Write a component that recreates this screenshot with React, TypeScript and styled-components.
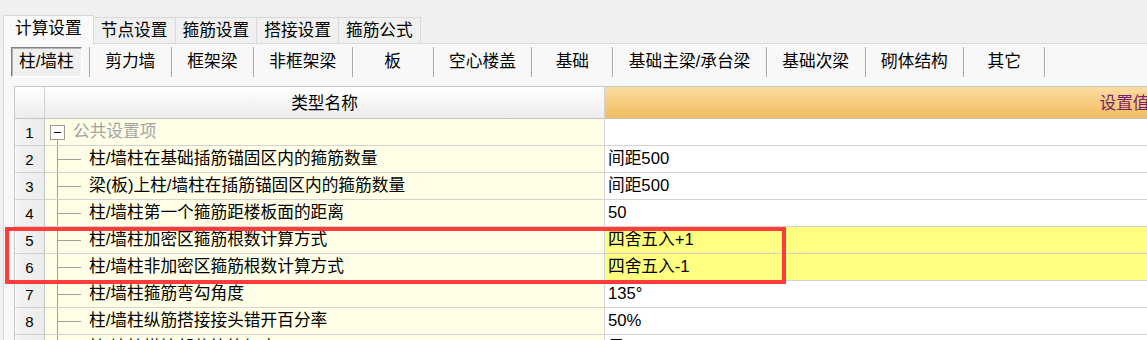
import React from 'react';
import styled, { createGlobalStyle } from 'styled-components';

const Global = createGlobalStyle`
  html, body { margin: 0; padding: 0; background: #f0f0f0; overflow: hidden; }
  body { font-family: "Liberation Sans", "Noto Sans CJK SC", sans-serif; }
`;

const Page = styled.div`
  position: relative;
  width: 1147px;
  height: 340px;
  overflow: hidden;
  background: #f0f0f0;
  font-size: 16.7px;
  color: #000;
  line-height: 1;
`;

const TabStrip = styled.div`
  display: flex;
  align-items: flex-end;
  height: 44px;
  padding-left: 3px;
  box-sizing: border-box;
`;

const Tab = styled.div<{ $active?: boolean }>`
  box-sizing: border-box;
  display: flex;
  align-items: center;
  white-space: nowrap;
  height: ${(p) => (p.$active ? 29 : 27)}px;
  padding: ${(p) => (p.$active ? '0 11px 1px' : '2px 7px 0')};
  border: 1px solid #d9d9d9;
  border-bottom: ${(p) => (p.$active ? 'none' : '1px solid #d9d9d9')};
  margin-left: ${(p) => (p.$active ? 0 : -1)}px;
  background: ${(p) => (p.$active ? '#fafafa' : '#f0f0f0')};
`;

const StripFill = styled.div`
  flex: 1;
  border-bottom: 1px solid #d9d9d9;
`;

const Panel = styled.div`
  margin-left: 3px;
  border-left: 1px solid #d9d9d9;
  background: #f8f8f8;
  height: 296px;
`;

const SubTabs = styled.div`
  display: flex;
  align-items: flex-start;
  height: 42px;
  box-sizing: border-box;
  padding: 3px 0 0 7px;
`;

const SubTab = styled.div<{ $active?: boolean; $first?: boolean }>`
  box-sizing: border-box;
  height: 30px;
  display: flex;
  align-items: center;
  justify-content: center;
  white-space: nowrap;
  ${(p) =>
    p.$active
      ? `
    padding: 0 7px;
    margin-right: 7px;
    background: #f0f0f0;
    border: 1px solid;
    border-color: #808080 #ffffff #ffffff #808080;
    box-shadow: inset 1px 1px 0 #b4b4b4;
  `
      : `
    min-width: 81px;
    padding: 0 15.5px;
    border-right: 1px solid #a8a8a8;
    box-shadow: 1px 0 0 #ffffff;
    ${p.$first ? 'border-left: 1px solid #a8a8a8;' : ''}
  `}
`;

const Grid = styled.div`
  margin-left: 10px;
  display: grid;
  grid-template-columns: 30px 560px 1040px;
  grid-template-rows: 32px;
  grid-auto-rows: 27px;
  border-top: 1px solid #c8c8c8;
  border-left: 1px solid #c8c8c8;
  width: max-content;
`;

const Cell = styled.div`
  box-sizing: border-box;
  border-right: 1px solid #d2d2d2;
  border-bottom: 1px solid #d2d2d2;
  display: flex;
  align-items: center;
  white-space: nowrap;
  overflow: hidden;
`;

const HeadCell = styled(Cell)<{ $accent?: boolean }>`
  justify-content: center;
  padding-top: 4px;
  background: ${(p) =>
    p.$accent
      ? 'linear-gradient(#fbdda2, #f0bc5e)'
      : 'linear-gradient(#ffffff, #ececec)'};
  color: ${(p) => (p.$accent ? '#7a1f70' : '#000')};
  border-bottom-color: #c4c4c4;
`;

const NumCell = styled(Cell)`
  justify-content: center;
  background: linear-gradient(90deg, #ffffff 0, #f2f2f2 2px, #ececec 100%);
  border-right-color: #c4c4c4;
  font-size: 15px;
`;

const NameCell = styled(Cell)`
  align-items: stretch;
  background: #fffee6;
`;

const ValueCell = styled(Cell)<{ $hl?: boolean }>`
  background: ${(p) => (p.$hl ? '#ffff80' : '#ffffff')};
  padding-left: 3px;
`;

const Label = styled.span<{ $muted?: boolean }>`
  align-self: center;
  color: ${(p) => (p.$muted ? '#a4a4a4' : '#000')};
  margin-left: 8px;
`;

const GroupCol = styled.div`
  display: flex;
  flex-direction: column;
  align-items: center;
  width: 15px;
  margin-left: 5px;
`;

const Spacer = styled.div`
  flex: 1;
`;

const Stem = styled.div`
  flex: 1;
  width: 0;
  border-left: 1px solid #a0a0a0;
`;

const ToggleBox = styled.div`
  box-sizing: border-box;
  width: 15px;
  height: 15px;
  border: 1px solid #9a9a9a;
  background: #fff;
  display: flex;
  align-items: center;
  justify-content: center;
  &::before {
    content: '';
    width: 7px;
    height: 1px;
    background: #000;
  }
`;

const Branch = styled.div`
  display: flex;
  flex-direction: column;
  width: 24px;
  margin-left: 12px;
`;

const BranchUpper = styled.div`
  flex: 1;
  border-left: 1px solid #a0a0a0;
  border-bottom: 1px solid #a0a0a0;
`;

const BranchLower = styled.div`
  flex: 1;
  border-left: 1px solid #a0a0a0;
`;

const Annotation = styled.div`
  position: absolute;
  left: 5px;
  top: 227px;
  width: 781px;
  height: 57px;
  box-sizing: border-box;
  border: 4px solid #ff3b3b;
  pointer-events: none;
`;

const topTabs = ['计算设置', '节点设置', '箍筋设置', '搭接设置', '箍筋公式'];
const subTabs = [
  '柱/墙柱',
  '剪力墙',
  '框架梁',
  '非框架梁',
  '板',
  '空心楼盖',
  '基础',
  '基础主梁/承台梁',
  '基础次梁',
  '砌体结构',
  '其它',
];

type Row = { n: number; name: string; value: string; group?: boolean; hl?: boolean };

const rows: Row[] = [
  { n: 1, name: '公共设置项', value: '', group: true },
  { n: 2, name: '柱/墙柱在基础插筋锚固区内的箍筋数量', value: '间距500' },
  { n: 3, name: '梁(板)上柱/墙柱在插筋锚固区内的箍筋数量', value: '间距500' },
  { n: 4, name: '柱/墙柱第一个箍筋距楼板面的距离', value: '50' },
  { n: 5, name: '柱/墙柱加密区箍筋根数计算方式', value: '四舍五入+1', hl: true },
  { n: 6, name: '柱/墙柱非加密区箍筋根数计算方式', value: '四舍五入-1', hl: true },
  { n: 7, name: '柱/墙柱箍筋弯勾角度', value: '135°' },
  { n: 8, name: '柱/墙柱纵筋搭接接头错开百分率', value: '50%' },
  { n: 9, name: '柱/墙柱搭接部位箍筋加密', value: '是' },
];

export default function App() {
  return (
    <Page>
      <Global />
      <TabStrip>
        {topTabs.map((t, i) => (
          <Tab key={t} $active={i === 0}>
            {t}
          </Tab>
        ))}
        <StripFill />
      </TabStrip>
      <Panel>
        <SubTabs>
          {subTabs.map((t, i) => (
            <SubTab key={t} $active={i === 0} $first={i === 1}>
              {t}
            </SubTab>
          ))}
        </SubTabs>
        <Grid>
          <HeadCell />
          <HeadCell>类型名称</HeadCell>
          <HeadCell $accent>设置值</HeadCell>
          {rows.map((r) => (
            <React.Fragment key={r.n}>
              <NumCell>{r.n}</NumCell>
              <NameCell>
                {r.group ? (
                  <>
                    <GroupCol>
                      <Spacer />
                      <ToggleBox />
                      <Stem />
                    </GroupCol>
                    <Label $muted>{r.name}</Label>
                  </>
                ) : (
                  <>
                    <Branch>
                      <BranchUpper />
                      <BranchLower />
                    </Branch>
                    <Label>{r.name}</Label>
                  </>
                )}
              </NameCell>
              <ValueCell $hl={r.hl}>{r.value}</ValueCell>
            </React.Fragment>
          ))}
        </Grid>
      </Panel>
      <Annotation />
    </Page>
  );
}
